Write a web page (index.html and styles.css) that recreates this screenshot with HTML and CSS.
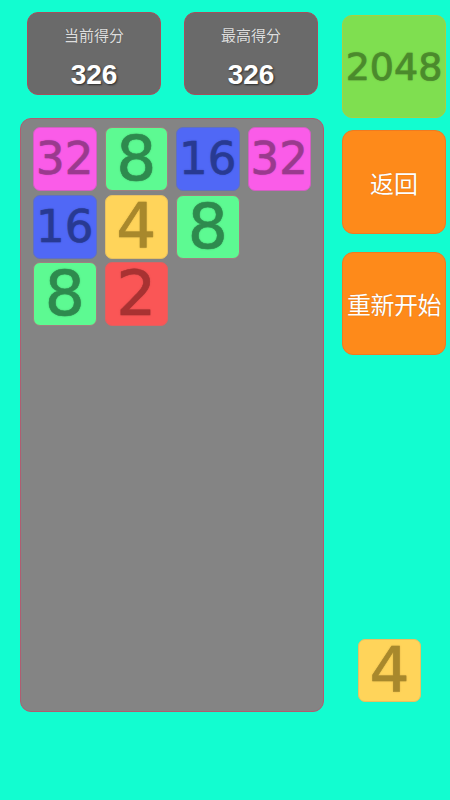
FILE: index.html
```html
<!DOCTYPE html>
<html lang="zh">
<head>
<meta charset="utf-8">
<title>2048</title>
<link rel="stylesheet" href="styles.css">
</head>
<body>
<div class="page">
  <div class="left">
    <div class="scores">
      <div class="score-box">
        <div class="score-label">当前得分</div>
        <div class="score-value">326</div>
      </div>
      <div class="score-box">
        <div class="score-label">最高得分</div>
        <div class="score-value">326</div>
      </div>
    </div>
    <div class="board">
      <div class="tile t32"><span class="two">32</span></div>
      <div class="tile t8"><span>8</span></div>
      <div class="tile t16"><span class="two">16</span></div>
      <div class="tile t32"><span class="two">32</span></div>
      <div class="tile t16"><span class="two">16</span></div>
      <div class="tile t4"><span>4</span></div>
      <div class="tile t8"><span>8</span></div>
      <div class="cell"></div>
      <div class="tile t8"><span>8</span></div>
      <div class="tile t2"><span>2</span></div>
    </div>
  </div>
  <div class="right">
    <div class="logo">2048</div>
    <div class="btn btn-back">返回</div>
    <div class="btn btn-restart">重新开始</div>
    <div class="tile t4 next"><span>4</span></div>
  </div>
</div>
</body>
</html>
```

FILE: styles.css
```css
html, body {
  margin: 0;
  padding: 0;
}
body {
  background: #12fdd0;
  width: 450px;
  height: 800px;
  overflow: hidden;
  font-family: "Liberation Sans", "Noto Sans CJK SC", sans-serif;
}
.page {
  display: flex;
  align-items: flex-start;
}
.left {
  margin-left: 20px;
  width: 304px;
  display: flex;
  flex-direction: column;
}
.scores {
  display: flex;
  gap: 23px;
  margin: 12px 0 0 7px;
}
.score-box {
  box-sizing: border-box;
  width: 134px;
  height: 83px;
  background: #6a6a6a;
  border: 1px solid #a4505c;
  border-radius: 11px;
  display: flex;
  flex-direction: column;
  align-items: center;
}
.score-label {
  margin-top: 11px;
  font-family: "Noto Sans CJK SC", sans-serif;
  font-size: 15px;
  line-height: 22px;
  color: #dedede;
  text-shadow: 0 0 1px #555;
}
.score-value {
  margin-top: 14px;
  font-family: "Liberation Sans", sans-serif;
  font-weight: bold;
  font-size: 28px;
  line-height: 30px;
  color: #ffffff;
  text-shadow: 1px 1px 2px #2a2a2a;
}
.board {
  box-sizing: border-box;
  margin-top: 23px;
  height: 594px;
  background: #848484;
  border: 1px solid #b05c70;
  border-radius: 11px;
  padding: 8px 0 0 12px;
  display: grid;
  grid-template-columns: repeat(4, 63.5px);
  grid-auto-rows: 64px;
  column-gap: 8px;
  row-gap: 3.5px;
  align-content: start;
}
.tile {
  box-sizing: border-box;
  border-radius: 7px;
  display: flex;
  align-items: center;
  justify-content: center;
}
.tile span {
  font-family: "DejaVu Sans", sans-serif;
  font-size: 63px;
  line-height: 62px;
  display: inline-block;
  -webkit-text-stroke: 0.6px currentColor;
}
.tile span.two {
  font-size: 45px;
  line-height: 50px;
}
.t2 { background: #fa5656; border: 1px solid #e06060; }
.t2 span { color: #a83232; text-shadow: 0 0 2px #c84a4a; }
.t4 { background: #ffd45a; border: 1px solid #e8c060; }
.t4 span { color: #a8882c; text-shadow: 0 0 2px #c8a240; }
.t8 { background: #5dfa92; border: 1px solid #a08080; }
.t8 span { color: #2e8a4e; text-shadow: 0 0 2px #3ea862; }
.t16 { background: #5068f6; border: 1px solid #6070c0; }
.t16 span { color: #283a92; text-shadow: 0 0 2px #3a4eb8; }
.t32 { background: #fa5ce8; border: 1px solid #d060c0; }
.t32 span { color: #9a3a8e; text-shadow: 0 0 2px #c04cb4; }
.right {
  margin-left: 18px;
  width: 104px;
  display: flex;
  flex-direction: column;
}
.logo {
  box-sizing: border-box;
  margin-top: 15px;
  height: 103px;
  background: #7fdf50;
  border: 1px solid #a8d040;
  border-radius: 10px;
  display: flex;
  align-items: center;
  justify-content: center;
  font-family: "DejaVu Sans", sans-serif;
  font-size: 38px;
  color: #4b8a2c;
  -webkit-text-stroke: 0.7px #4b8a2c;
  text-shadow: 0 0 2px #5fa83a;
}
.btn {
  box-sizing: border-box;
  background: #fe8a1a;
  border: 1px solid #f07a20;
  border-radius: 11px;
  display: flex;
  align-items: center;
  justify-content: center;
  font-family: "Noto Sans CJK SC", sans-serif;
  color: #ffffff;
  text-shadow: 0 0 1px #c06010;
}
.btn-back {
  margin-top: 12px;
  height: 104px;
  font-size: 24px;
}
.btn-restart {
  margin-top: 18px;
  height: 103px;
  font-size: 24px;
  white-space: nowrap;
  letter-spacing: -0.5px;
}
.next {
  margin-top: 284px;
  margin-left: 16px;
  width: 63px;
  height: 63px;
}
```
